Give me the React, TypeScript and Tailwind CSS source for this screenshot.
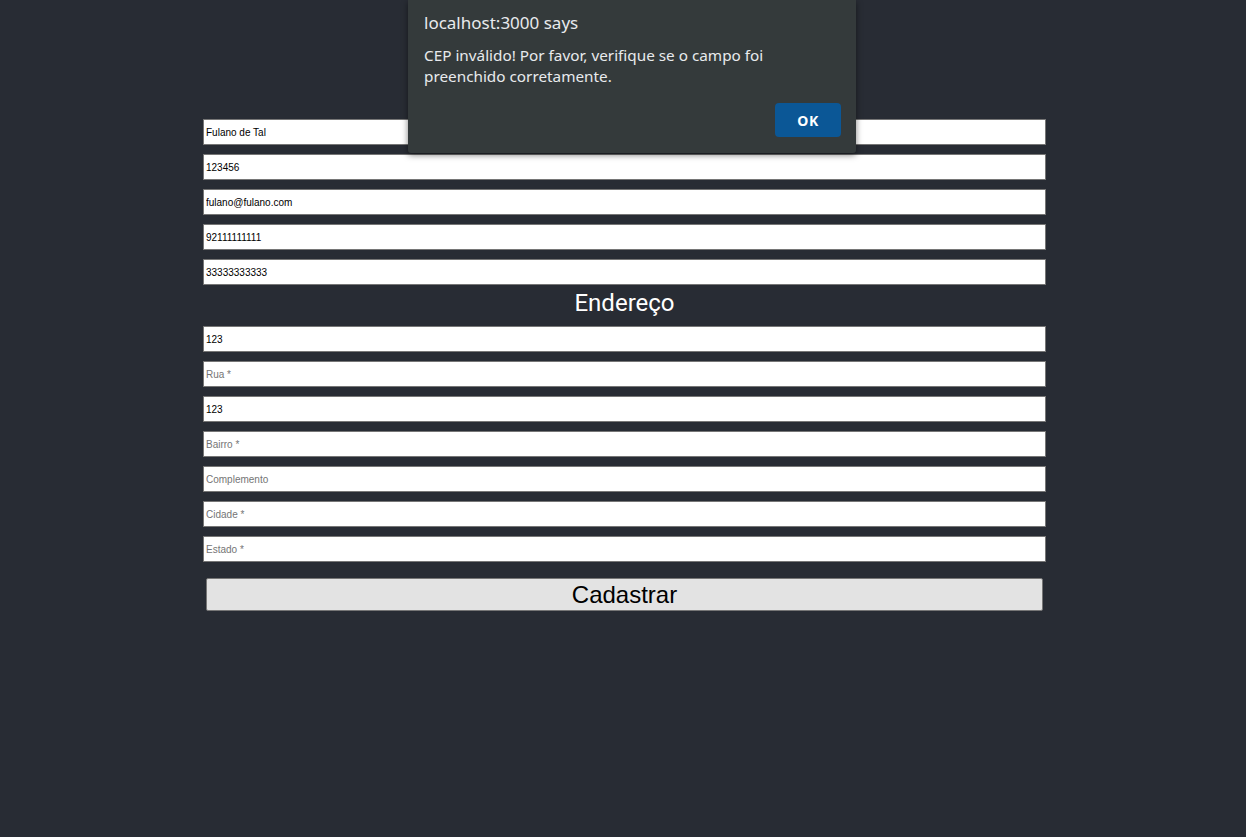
import React from "react";

const topFields: { value?: string; placeholder?: string }[] = [
  { value: "Fulano de Tal" },
  { value: "123456" },
  { value: "fulano@fulano.com" },
  { value: "92111111111" },
  { value: "33333333333" },
];

const addrFields: { value?: string; placeholder?: string }[] = [
  { value: "123" },
  { placeholder: "Rua *" },
  { value: "123" },
  { placeholder: "Bairro *" },
  { placeholder: "Complemento" },
  { placeholder: "Cidade *" },
  { placeholder: "Estado *" },
];

function Field({ value, placeholder }: { value?: string; placeholder?: string }) {
  return (
    <input
      readOnly
      defaultValue={value}
      placeholder={placeholder}
      className="block w-[843px] h-[26px] bg-white border border-[#767676] px-[2px] text-[10px] text-black placeholder:text-[#757575] outline-none"
      style={{ fontFamily: '"Liberation Sans", Arial, sans-serif' }}
    />
  );
}

export default function App() {
  return (
    <div className="relative min-h-[837px] w-full bg-[#282c34] overflow-hidden">
      <div className="ml-[203px] pt-[119px] w-[843px] flex flex-col">
        <div className="flex flex-col gap-[9px]">
          {topFields.map((f, i) => (
            <Field key={i} {...f} />
          ))}
        </div>
        <h2
          className="mt-[4px] text-center text-[24px] leading-[28px] text-white"
          style={{ fontFamily: 'Roboto, "Noto Sans", sans-serif' }}
        >
          Endereço
        </h2>
        <div className="mt-[9px] flex flex-col gap-[9px]">
          {addrFields.map((f, i) => (
            <Field key={i} {...f} />
          ))}
        </div>
        <button
          className="mt-[16px] ml-[3px] w-[837px] h-[33px] bg-[#e3e3e3] border border-[#767676] rounded-[2px] text-[24px] leading-[30px] text-black"
          style={{ fontFamily: '"Liberation Sans", Arial, sans-serif' }}
        >
          Cadastrar
        </button>
      </div>

      <div
        className="absolute left-[408px] top-0 w-[448px] h-[153px] bg-[#343a3b] rounded-b-[3px] shadow-[0_2px_6px_rgba(0,0,0,0.5)] px-[16px] pt-[10px]"
        style={{ fontFamily: '"Noto Sans", "Open Sans", sans-serif' }}
      >
        <div className="text-[17px] leading-[26px] text-[#e8eaed]">localhost:3000 says</div>
        <div className="mt-[9px] text-[15.3px] leading-[21px] text-[#e8eaed]">
          CEP inválido! Por favor, verifique se o campo foi
          <br />
          preenchido corretamente.
        </div>
        <div className="flex justify-end mt-[16px]">
          <button className="w-[66px] h-[34px] rounded-[4px] bg-[#0b5796] text-white text-[14px] font-bold tracking-[0.5px] mr-[-1px]">
            OK
          </button>
        </div>
      </div>
    </div>
  );
}
